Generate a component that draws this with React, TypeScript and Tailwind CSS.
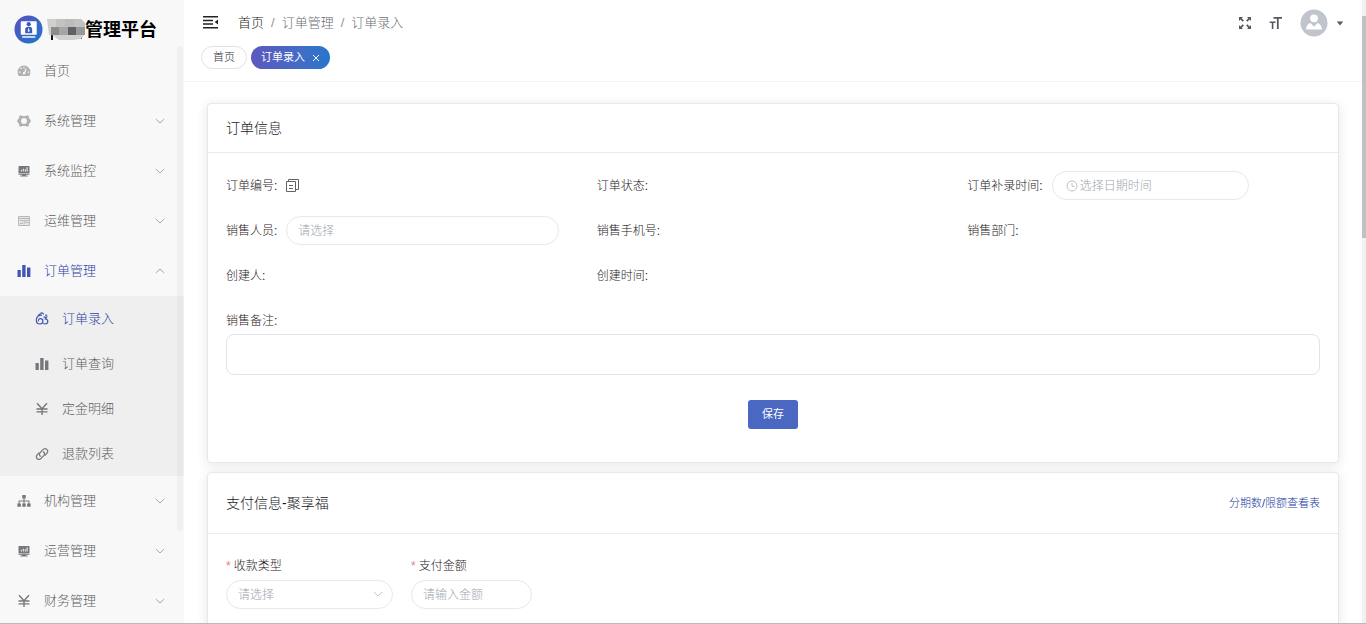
import type { ReactNode } from "react";

const svg = "block h-[14px] w-[14px] shrink-0";

const DashboardIcon = () => (
  <svg viewBox="0 0 14 14" className={svg} fill="currentColor">
    <path
      fillRule="evenodd"
      d="M7 1.600A6.400 6.400 0 0 0 .6 8c0 1.500.5 2.800 1.200 3.900h10.400A6.600 6.600 0 0 0 13.400 8 6.400 6.400 0 0 0 7 1.600ZM6.400 3h1.200v1.400H6.400V3ZM3.200 4.300l.8-.8 1 1-.8.8-1-1ZM1.900 7.600h1.500v1.100H1.900V7.600Zm8.700 0h1.500v1.100h-1.500V7.600ZM8.600 4.600l1 .4-1.300 3.800c.3.8-.2 1.700-1.300 1.700s-1.700-1.200-1-2c.3-.4.8-.5 1.200-.5l1.400-3.400Z"
    />
  </svg>
);
const GearIcon = () => (
  <svg viewBox="0 0 14 14" className={svg} fill="currentColor">
    <path
      fillRule="evenodd"
      d="M3.600 1.200 5.200 2h3.600l1.600-.8 1.300.9.3 1.900 1.800 2.600v.8L12 10l-.3 1.900-1.300.9-1.600-.8H5.200l-1.600.8-1.300-.9L2 10 .2 7.400v-.8L2 4l.3-1.900 1.300-.9ZM7 4a3 3 0 1 0 0 6 3 3 0 0 0 0-6Z"
    />
  </svg>
);
const MonitorIcon = () => (
  <svg viewBox="0 0 14 14" className={svg} fill="currentColor">
    <path
      fillRule="evenodd"
      d="M2.200 2h9.600a.7.7 0 0 1 .7.7V9H1.500V2.700a.7.7 0 0 1 .7-.7ZM3.800 5.700v1.800h1V5.700h-1Zm2-1v2.800h1V4.700h-1Zm2 .5v2.300h1V5.200h-1Zm1.800-1.900v4.200h1V3.300h-1Z"
    />
    <path d="M1.500 9.600h11v1.100H8.700v.8h2v1H3.300v-1h2v-.8H1.500z" />
  </svg>
);
const ServerIcon = () => (
  <svg viewBox="0 0 14 14" className={svg} fill="none" stroke="currentColor">
    <path d="M1.500 2.500h11v9h-11zM1.500 4.500h11M3 6.500h3.500M8 6.500h3.500M3 9.500h3M7.200 6v4M8.500 8.500h3" />
    <path d="M1.500 2.500h11v9h-11z" fill="currentColor" fillOpacity=".3" stroke="none" />
  </svg>
);
const BarsIcon = () => (
  <svg viewBox="0 0 14 14" className={svg} fill="currentColor">
    <path d="M.5 6h3.300v7H.5zM5.200 1h3.400v12H5.200zM10 3.500h3.400V13H10z" />
  </svg>
);
const EntryIcon = () => (
  <svg viewBox="0 0 14 14" className={svg} fill="none" stroke="currentColor" strokeWidth="1.200">
    <path d="M3 3.600C4 2.200 5 1.600 6.300 1.500M7 3.300C4 2.700 1.300 5 1.300 8c0 2.300 1.600 4 3.600 4 1.800 0 3-1.200 3-2.700S6.800 6.700 5.300 6.700 3 8 3.500 9.400" />
    <path d="M5.500 1.200c1.500-.6 2.800 0 3 1.300M8.500 5.200h3.200L10.300 7c1.500 0 2.500.9 2.500 2.300S11.600 12 10 12c-.7 0-1.300-.2-1.800-.6M10 3l2.200.3" />
  </svg>
);
const YenIcon = () => (
  <svg viewBox="0 0 14 14" className={svg} fill="none" stroke="currentColor" strokeWidth="1.400">
    <path d="M2 1.200 7 6.800l5-5.600M7 6.800V13M1.500 7h11M1.500 9.900h11" />
  </svg>
);
const LinkIcon = () => (
  <svg viewBox="0 0 14 14" className={svg} fill="none" stroke="currentColor" strokeWidth="1.200" strokeLinecap="round">
    <path d="M5.600 9.300C4.200 8.600 4 7.100 5 5.900l2.700-3c1.200-1.300 3-1.500 4.100-.5s1.100 2.700 0 4L10 8.300" />
    <path d="M8.300 4.900c1.400.7 1.700 2.200.7 3.400l-2.600 2.900c-1.200 1.300-3 1.500-4.100.5s-1.100-2.700 0-4L4 5.900" />
  </svg>
);
const TreeIcon = () => (
  <svg viewBox="0 0 14 14" className={svg} fill="currentColor">
    <path d="M5.300 1h3.400v3.400H7.500v2h4.900v3.100h1.200v3.300h-3.500V9.500h1.300V7.400H7.500v2.100h1.200v3.300H5.300V9.500h1.200V7.400H2.600v2.100h1.300v3.300H.4V9.500h1.200V6.400h4.900v-2H5.300z" />
  </svg>
);
const Chevron = ({ up = false }: { up?: boolean }) => (
  <svg viewBox="0 0 10 6" className="block h-[6px] w-[10px] shrink-0" fill="none" stroke="currentColor">
    <path d={up ? "M.8 5 5 1l4.200 4" : "M.8 1 5 5l4.200-4"} />
  </svg>
);

type Item = { label: string; icon: ReactNode; tone?: string; leaf?: boolean; open?: boolean };

const before: Item[] = [
  { label: "首页", icon: <DashboardIcon />, tone: "text-[#b0b1b3]", leaf: true },
  { label: "系统管理", icon: <GearIcon />, tone: "text-[#b0b1b3]" },
  { label: "系统监控", icon: <MonitorIcon />, tone: "text-[#75777b]" },
  { label: "运维管理", icon: <ServerIcon />, tone: "text-[#b8b9bb]" },
  { label: "订单管理", icon: <BarsIcon />, open: true },
];
const children: Item[] = [
  { label: "订单录入", icon: <EntryIcon />, open: true },
  { label: "订单查询", icon: <BarsIcon /> },
  { label: "定金明细", icon: <YenIcon /> },
  { label: "退款列表", icon: <LinkIcon /> },
];
const after: Item[] = [
  { label: "机构管理", icon: <TreeIcon /> },
  { label: "运营管理", icon: <MonitorIcon /> },
  { label: "财务管理", icon: <YenIcon /> },
];

function MenuItem({ item }: { item: Item }) {
  return (
    <li>
      <a
        href="#"
        className={`flex h-[50px] items-center pr-[19px] pl-[17px] text-[13px] ${item.open ? "text-[#2c43a8]" : "text-[#5c5e62]"}`}
      >
        <span className={item.tone ?? (item.open ? "text-[#4257b2]" : "text-[#75777b]")}>{item.icon}</span>
        <span className="ml-[13px] grow">{item.label}</span>
        {!item.leaf && (
          <span className="text-[#a8aaad]">
            <Chevron up={item.open} />
          </span>
        )}
      </a>
    </li>
  );
}

function Sidebar() {
  return (
    <aside className="flex w-[184px] shrink-0 flex-col bg-[#f8f8f8]">
      <div className="flex h-[46px] shrink-0 items-center pt-[13px] pl-[14px]">
        <svg viewBox="0 0 30 30" className="h-[29px] w-[29px] shrink-0">
          <defs>
            <linearGradient id="brand" x1="0" y1="0" x2="1" y2="1">
              <stop offset="0" stopColor="#5a4fc0" />
              <stop offset="1" stopColor="#1e78cc" />
            </linearGradient>
          </defs>
          <circle cx="15" cy="15" r="14.500" fill="url(#brand)" />
          <rect x="7" y="6.500" width="16.500" height="14" rx=".8" fill="#fff" />
          <path d="M8.500 22h13.500v1.500H8.500z" fill="#fff" />
          <circle cx="15.200" cy="9.500" r="2.200" fill="#3a5cba" />
          <path d="M11.600 19v-4.500c0-1.500 1.700-2.300 3.600-2.300s3.600.8 3.600 2.300V19z" fill="#3a5cba" />
          <path d="m15.200 13 1 3.500-1 1.200-1-1.200z" fill="#fff" />
        </svg>
        <svg viewBox="0 0 38 24" className="ml-1 h-[24px] w-[38px] shrink-0">
          <path d="M4 14h2v8H4zM32 18h3v3h-3z" fill="#111" />
          <path d="M0 1h34l4 4v11l-4 5-8 1H12L5 17H2z" fill="#d0d0ce" />
          <path d="M9 1h9v8H9z" fill="#c4c4bf" />
          <path d="M18 1h9v8h-9z" fill="#bcbcba" />
          <path d="M27 1h7l4 4v4H27z" fill="#c2c2c0" />
          <path d="M4 9h8v8H4z" fill="#8c8c8c" />
          <path d="M12 9h9v8h-9z" fill="#a5a5a5" />
          <path d="M21 9h8v8h-8z" fill="#606066" />
          <path d="M29 9h9v8h-9z" fill="#989898" />
        </svg>
        <span className="text-[18px] leading-6 font-bold text-black">管理平台</span>
      </div>
      <nav className="relative min-h-0 grow overflow-hidden">
        <ul>
          {before.map((i) => (
            <MenuItem key={i.label} item={i} />
          ))}
          <li>
            <ul className="bg-[#efefef]">
              {children.map((i) => (
                <li key={i.label}>
                  <a
                    href="#"
                    className={`flex h-[45px] items-center gap-[13px] pl-[35px] text-[13px] ${i.open ? "text-[#2c43a8]" : "text-[#5c5e62]"}`}
                  >
                    <span className={i.open ? "text-[#4257b2]" : "text-[#75777b]"}>{i.icon}</span>
                    {i.label}
                  </a>
                </li>
              ))}
            </ul>
          </li>
          {after.map((i) => (
            <MenuItem key={i.label} item={i} />
          ))}
        </ul>
        <div className="absolute top-0 right-[1px] h-[84%] w-[6px] rounded-sm bg-[#909399]/8" />
      </nav>
    </aside>
  );
}

function Header() {
  return (
    <header className="border-b border-[#f3f3f4]">
      <div className="flex h-[46px] items-center pr-[18px] pl-[19px]">
        <button type="button" aria-label="收起菜单" className="text-[#222]">
          <svg viewBox="0 0 16 14" className="block h-[14px] w-[16px]" fill="currentColor">
            <path d="M0 0h15v1.500H0zM0 3.800h10v1.400H0zM0 7.300h10v1.400H0zM0 11h15v1.500H0zM15 3.400v5.200L11.700 6z" />
          </svg>
        </button>
        <nav className="ml-[19px] flex grow items-center gap-[7px] text-[13px] text-[#6c6f74]">
          <a href="#" className="text-[#1c1e22]">首页</a>
          <span className="text-[#8f939a]">/</span>
          <span>订单管理</span>
          <span className="text-[#8f939a]">/</span>
          <span>订单录入</span>
        </nav>
        <div className="flex items-center text-[#55585e]">
          <button type="button" aria-label="全屏">
            <svg viewBox="0 0 14 14" className="block h-[14px] w-[14px]" fill="currentColor">
              <path d="M1 1h4L3.700 2.300 5.900 4.500 4.700 5.700 2.400 3.500 1 5zM13 1v4l-1.400-1.500-2.300 2.200-1.200-1.200 2.200-2.200L9 1zM1 13V9l1.400 1.500 2.300-2.200 1.200 1.200-2.200 2.200L5 13zM13 13H9l1.300-1.300-2.200-2.200 1.200-1.200 2.300 2.200L13 9z" />
            </svg>
          </button>
          <button type="button" aria-label="字体大小" className="ml-[17px]">
            <svg viewBox="0 0 14 14" className="block h-[14px] w-[14px]" fill="currentColor">
              <path d="M4.500 1H13v1.700H9.700V13H7.900V2.700H4.500zM.7 5.500h5.800V7H4.400v6H2.800V7H.7z" />
            </svg>
          </button>
          <button type="button" aria-label="用户" className="ml-[17px] flex items-center gap-2">
            <svg viewBox="0 0 28 28" className="block h-[28px] w-[28px]">
              <circle cx="14" cy="14" r="13.500" fill="#c0c4cc" />
              <circle cx="14" cy="9.300" r="3.900" fill="#fff" />
              <path d="M6 20.500c.2-3.500 1.900-5.700 4.600-6.500l3.400 3.700 3.400-3.700c2.700.8 4.400 3 4.600 6.500z" fill="#fff" />
            </svg>
            <svg viewBox="0 0 8 5" className="block h-[5px] w-[8px]" fill="currentColor">
              <path d="M.8.5h6.400L4 4.500z" />
            </svg>
          </button>
        </div>
      </div>
      <div className="flex gap-1 pb-3 pl-[17px] text-[11px]">
        <a href="#" className="flex h-[23px] items-center rounded-full border border-[#dfe1ea] px-[11px] text-[#2c313c]">首页</a>
        <a href="#" className="flex h-[23px] items-center gap-[7px] rounded-full bg-linear-to-r from-[#5b58bf] to-[#2477cb] px-[10px] font-normal text-white">
          订单录入
          <svg viewBox="0 0 8 8" className="h-[8px] w-[8px]" stroke="currentColor">
            <path d="m1 1 6 6M7 1 1 7" />
          </svg>
        </a>
      </div>
    </header>
  );
}

const field =
  "h-[29px] rounded-full border border-[#e6e8ec] bg-white px-[11px] text-[12px] placeholder:text-[#a0a5ae] outline-none";

const Row = ({ label, id, children }: { label: string; id?: string; children?: ReactNode }) => (
  <div className="flex h-[45px] items-center gap-[9px]">
    {id ? <label htmlFor={id}>{label}</label> : <span>{label}</span>}
    {children}
  </div>
);

const card = "rounded-[4px] border border-[#e6e8ec] bg-white shadow-[0_2px_12px_rgba(0,0,0,0.1)]";

function OrderCard() {
  return (
    <section className={card}>
      <h2 className="flex h-[49px] items-center border-b border-[#e9ebef] px-[18px] text-[14px] text-[#17191c]">订单信息</h2>
      <form className="px-[18px] pt-[10px] pb-[33px] text-[12px] text-[#1f2124]">
        <div className="grid grid-cols-3 gap-x-[18px]">
          <Row label="订单编号:">
            <button type="button" aria-label="复制" className="text-[#606266]">
              <svg viewBox="0 0 13 13" className="block h-[13px] w-[13px]" fill="none" stroke="currentColor">
                <path d="M.5 2.500h9v10h-9zM2.500 2.500v-2h10v10h-3M3 6.500h4M3 9.500h4" />
              </svg>
            </button>
          </Row>
          <Row label="订单状态:" />
          <Row label="订单补录时间:" id="time">
            <span className={`${field} flex w-[197px] items-center gap-[2px] pl-[13px]`}>
              <svg viewBox="0 0 12 12" className="h-[12px] w-[12px] shrink-0 text-[#bfc3ca]" fill="none" stroke="currentColor">
                <circle cx="6" cy="6" r="5" />
                <path d="M6 3v3.300h2.500" />
              </svg>
              <input id="time" placeholder="选择日期时间" className="min-w-0 grow outline-none placeholder:text-[#a0a5ae]" />
            </span>
          </Row>
          <Row label="销售人员:" id="seller">
            <input id="seller" placeholder="请选择" className={`${field} w-[273px]`} />
          </Row>
          <Row label="销售手机号:" />
          <Row label="销售部门:" />
          <Row label="创建人:" />
          <Row label="创建时间:" />
        </div>
        <label htmlFor="remark" className="block pt-[14px] pb-1 leading-[18px]">销售备注:</label>
        <textarea id="remark" className="block h-[41px] w-full resize-none rounded-[8px] border border-[#e1e3e8] outline-none" />
        <div className="mt-[25px] flex justify-center">
          <button type="button" className="h-[29px] rounded-[3px] bg-[#4a67c1] px-[14px] text-[11px] font-normal text-white">
            保存
          </button>
        </div>
      </form>
    </section>
  );
}

function PaymentCard() {
  return (
    <section className={card}>
      <div className="flex h-[61px] items-center justify-between border-b border-[#e9ebef] px-[18px]">
        <h2 className="text-[14px] text-[#17191c]">支付信息-聚享福</h2>
        <a href="#" className="text-[11px] text-[#233aa0]">分期数/限额查看表</a>
      </div>
      <form className="flex gap-[18px] px-[18px] pt-[23px] pb-10 text-[12px] text-[#1f2124]">
        <div className="w-[167px]">
          <label htmlFor="type" className="flex h-[23px] gap-[3px] leading-[18px]">
            <span className="text-[#e88080]">*</span>收款类型
          </label>
          <div className="relative">
            <select id="type" className={`${field} w-full appearance-none text-[#a0a5ae]`}>
              <option>请选择</option>
            </select>
            <span className="pointer-events-none absolute top-[11px] right-[10px] text-[#bfc3ca]">
              <Chevron />
            </span>
          </div>
        </div>
        <div className="w-[121px]">
          <label htmlFor="amount" className="flex h-[23px] gap-[3px] leading-[18px]">
            <span className="text-[#e88080]">*</span>支付金额
          </label>
          <input id="amount" placeholder="请输入金额" className={`${field} w-full`} />
        </div>
      </form>
    </section>
  );
}

export default function App() {
  return (
    <div className="flex h-screen overflow-hidden border-b border-[#b9b9b9] bg-white font-['Liberation_Sans','Noto_Sans_CJK_SC',sans-serif] font-light">
      <Sidebar />
      <main className="min-w-0 grow overflow-hidden">
        <Header />
        <div className="flex flex-col gap-[9px] pt-[21px] pr-[23px] pl-[23px]">
          <OrderCard />
          <PaymentCard />
        </div>
      </main>
      <div className="w-[4px] shrink-0 bg-[#f1f1f1] pt-4">
        <div className="h-[222px] bg-[#c1c1c1]" />
      </div>
    </div>
  );
}
